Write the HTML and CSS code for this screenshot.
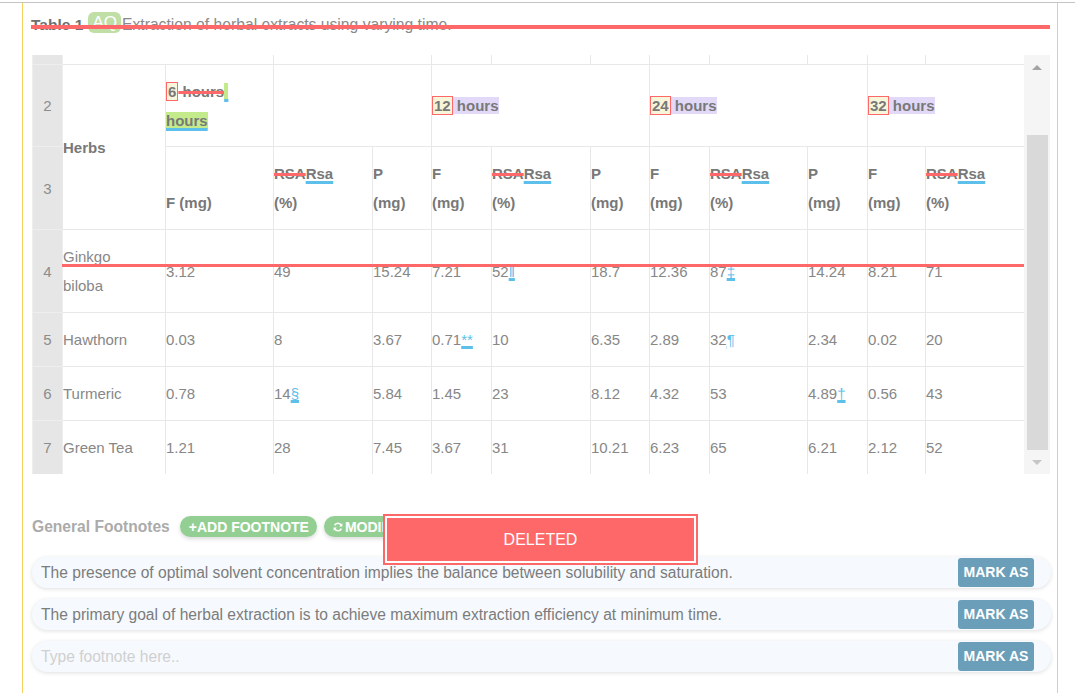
FILE: index.html
```html
<!DOCTYPE html>
<html lang="en">
  <head>
    <meta charset="UTF-8" />
    <title>Table 1 - Edit</title>
    <link rel="stylesheet" href="styles.css">
  </head>
  <body>
    <div class="page">
      <div class="panel">
        <div class="caption">
          <b>Table 1</b>
          <span class="aq">AQ</span><span class="cap-text">Extraction of herbal extracts using varying time.</span>
          <span class="strike-bar"></span>
        </div>

        <div class="grid-wrap">
          <div class="grid-view">
            <table class="grid">
              <colgroup>
                <col style="width:30px"><col style="width:103px"><col style="width:108px">
                <col style="width:99px"><col style="width:59px"><col style="width:60px">
                <col style="width:99px"><col style="width:59px"><col style="width:60px">
                <col style="width:98px"><col style="width:60px"><col style="width:58px">
                <col style="width:99px">
              </colgroup>
              <tr class="r-cut">
                <td class="rn"></td>
                <td colspan="2"></td><td colspan="2"></td>
                <td></td><td></td><td></td><td></td><td></td><td></td><td></td><td></td>
              </tr>
              <tr class="r-head">
                <td class="rn">2</td>
                <th rowspan="2" class="mid">Herbs</th>
                <th><span class="box">6</span><span class="del"> hours</span><span class="ins">&nbsp;</span><br><span class="ins">hours</span></th>
                <th colspan="2"></th>
                <th colspan="3"><span class="box">12</span><span class="hl"> hours</span></th>
                <th colspan="3"><span class="box">24</span><span class="hl"> hours</span></th>
                <th colspan="2"><span class="box">32</span><span class="hl"> hours</span></th>
              </tr>
              <tr class="r-sub">
                <td class="rn">3</td>
                <th>F (mg)</th>
                <th><span class="del">RSA</span><span class="und">Rsa</span><br>(%)</th>
                <th>P<br>(mg)</th>
                <th>F<br>(mg)</th>
                <th><span class="del">RSA</span><span class="und">Rsa</span><br>(%)</th>
                <th>P<br>(mg)</th>
                <th>F<br>(mg)</th>
                <th><span class="del">RSA</span><span class="und">Rsa</span><br>(%)</th>
                <th>P<br>(mg)</th>
                <th>F<br>(mg)</th>
                <th><span class="del">RSA</span><span class="und">Rsa</span><br>(%)</th>
              </tr>
              <tr class="r-tall">
                <td class="rn">4</td>
                <td>Ginkgo<br>biloba</td>
                <td>3.12</td><td>49</td><td>15.24</td><td>7.21</td>
                <td>52<span class="ref">‖</span></td>
                <td>18.7</td><td>12.36</td>
                <td>87<span class="ref">‡</span></td>
                <td>14.24</td><td>8.21</td><td>71</td>
              </tr>
              <tr class="r-body">
                <td class="rn">5</td>
                <td>Hawthorn</td>
                <td>0.03</td><td>8</td><td>3.67</td>
                <td>0.71<span class="ref">**</span></td>
                <td>10</td><td>6.35</td><td>2.89</td>
                <td>32<span class="ref">¶</span></td>
                <td>2.34</td><td>0.02</td><td>20</td>
              </tr>
              <tr class="r-body">
                <td class="rn">6</td>
                <td>Turmeric</td>
                <td>0.78</td>
                <td>14<span class="ref">§</span></td>
                <td>5.84</td><td>1.45</td><td>23</td><td>8.12</td><td>4.32</td><td>53</td>
                <td>4.89<span class="ref">†</span></td>
                <td>0.56</td><td>43</td>
              </tr>
              <tr class="r-body">
                <td class="rn">7</td>
                <td>Green Tea</td>
                <td>1.21</td><td>28</td><td>7.45</td><td>3.67</td><td>31</td>
                <td>10.21</td><td>6.23</td><td>65</td><td>6.21</td><td>2.12</td><td>52</td>
              </tr>
            </table>
            <!-- deleted row marker -->
            <div class="row-strike"></div>
          </div>
          <div class="sbar">
            <div class="sb-btn"><span class="arr-up"></span></div>
            <div class="sb-thumb"></div>
            <div class="sb-btn"><span class="arr-down"></span></div>
          </div>
        </div>

        <div class="fn-head">
          <span class="fn-title">General Footnotes</span>
          <span class="pill">+ADD FOOTNOTE</span>
          <span class="pill">
            <svg width="10" height="10" viewBox="0 0 10 10"><path d="M8.3 3.6A3.6 3.6 0 0 0 1.6 3.4M1.7 6.4a3.6 3.6 0 0 0 6.7.2" fill="none" stroke="#fff" stroke-width="1.6"/><path d="M9.4 1.2v3.2H6.2zM.6 8.8V5.6h3.2z" fill="#fff"/></svg>MODIFY
          </span>
          <div class="deleted">DELETED</div>
        </div>

        <div class="fn-row">
          <span class="fn-text">The presence of optimal solvent concentration implies the balance between solubility and saturation.</span>
          <span class="mark">MARK AS</span>
        </div>
        <div class="fn-row">
          <span class="fn-text">The primary goal of herbal extraction is to achieve maximum extraction efficiency at minimum time.</span>
          <span class="mark">MARK AS</span>
        </div>
        <div class="fn-row">
          <span class="fn-text empty">Type footnote here..</span>
          <span class="mark">MARK AS</span>
        </div>
      </div>
    </div>
  </body>
</html>
```

FILE: styles.css
```css
body {
  margin: 0;
  font-family: "Liberation Sans", Arial, sans-serif;
  font-size: 15px;
  color: #878787;
  background: #fff;
}
.page {
  margin-top: 2px;
  border-top: 1px solid #c4c4c4;
  height: 690px;
  overflow: hidden;
}
.panel {
  margin-left: 22px;
  width: 1019px;
  height: 100%;
  border-left: 1px solid #f7cf5c;
  border-right: 1px solid #f7cf5c;
  padding: 0 6px 0 9px;
}

/* caption */
.caption {
  position: relative;
  padding-top: 9px;
  height: 24px;
  line-height: 24px;
  white-space: nowrap;
}
.caption b {
  color: #6f6f6f;
  font-size: 15.5px;
  margin-left: -1px;
}
.aq {
  display: inline-block;
  background: #bfdfa6;
  color: #fff;
  font-size: 17px;
  line-height: 21px;
  padding: 0 4px;
  border-radius: 6px;
  vertical-align: 2px;
  margin-left: 1px;
}
.cap-text {
  color: #8a8a8a;
  font-size: 15.7px;
  margin-left: 1px;
}
.strike-bar {
  position: absolute;
  left: -1px;
  right: 1px;
  top: 22px;
  height: 4px;
  background: #ff6868;
}

/* table */
.grid-wrap {
  margin-top: 19px;
  width: 1018px;
  height: 419px;
  display: flex;
}
.grid-view {
  position: relative;
  width: 992px;
  height: 419px;
  overflow: hidden;
}
.grid {
  border-collapse: collapse;
  table-layout: fixed;
  width: 992px;
}
.grid td,
.grid th {
  border: 1px solid #e8e8e8;
  padding: 0 14px 0 0;
  line-height: 29px;
  text-align: left;
  vertical-align: middle;
  overflow: hidden;
}
.grid th {
  font-weight: bold;
  color: #787878;
}
.grid td.rn {
  background: #e6e6e6;
  border-color: #eeeeee;
  text-align: center;
  padding: 0;
  color: #8c8c8c;
}
.r-cut td {
  height: 9px;
  line-height: 0;
  border-top: none;
}
.r-head td,
.r-head th {
  height: 81px;
}
.r-sub th {
  height: 70px;
  vertical-align: bottom;
  padding-bottom: 12px;
}
.r-sub td.rn,
.grid th.mid {
  vertical-align: middle;
  padding-bottom: 0;
}
.r-tall td {
  height: 82px;
}
.r-body td {
  height: 53px;
}
.box {
  background: #f8f6da;
  border: 1px solid #ff6868;
  padding: 0 1px;
}
.hl {
  background: #e2d9f8;
}
.del {
  text-decoration: line-through #ff6868 3px;
}
.und {
  text-decoration: underline #5cc0ea 3px;
  text-underline-offset: 2px;
}
.ins {
  background: #c4eb8b;
  text-decoration: underline #5cc0ea 3px;
  text-underline-offset: 2px;
}
.ref {
  color: #5cc0ea;
  text-decoration: underline #5cc0ea 3px;
  text-underline-offset: 1px;
}
.row-strike {
  position: absolute;
  left: 30px;
  right: 0;
  top: 209px;
  height: 3px;
  background: #ff6868;
}

/* scrollbar */
.sbar {
  width: 26px;
  background: #f5f5f5;
  display: flex;
  flex-direction: column;
}
.sb-btn {
  height: 24px;
  display: flex;
  align-items: center;
  justify-content: center;
}
.arr-up {
  border-left: 5px solid transparent;
  border-right: 5px solid transparent;
  border-bottom: 5px solid #a3a3a3;
}
.arr-down {
  border-left: 5px solid transparent;
  border-right: 5px solid transparent;
  border-top: 5px solid #c6c6c6;
}
.sb-thumb {
  margin: 56px 2px 0 3px;
  height: 315px;
  background: #d9d9d9;
}

/* footnotes */
.fn-head {
  position: relative;
  margin-top: 42px;
  height: 21px;
  display: flex;
  align-items: center;
  gap: 7px;
}
.fn-title {
  font-weight: bold;
  font-size: 15.6px;
  color: #ababab;
  margin-right: 3px;
}
.pill {
  display: inline-flex;
  align-items: center;
  gap: 1px;
  height: 21px;
  padding: 0 8px 0 9px;
  border-radius: 11px;
  background: #93cf92;
  color: #fff;
  font-size: 14px;
  font-weight: bold;
  box-shadow: 0 2px 4px rgba(0, 0, 0, 0.15);
}
.pill svg {
  margin-right: 1px;
}
.deleted {
  position: absolute;
  left: 353px;
  top: 0;
  width: 307px;
  height: 43px;
  line-height: 43px;
  background: #ff6868;
  border: 2px solid #fff;
  outline: 2px solid #ff6868;
  color: #fff;
  text-align: center;
  font-size: 16px;
}
.fn-row {
  display: flex;
  align-items: center;
  height: 31px;
  margin-top: 11px;
  padding-left: 9px;
  border-radius: 16px;
  background: #f6fafe;
  box-shadow: 0 1px 4px rgba(0, 0, 0, 0.13);
}
.fn-head + .fn-row {
  margin-top: 20px;
}
.fn-text {
  color: #7c7c7c;
  font-size: 15.6px;
  white-space: nowrap;
}
.fn-text.empty {
  color: #d0d0d0;
}
.mark {
  margin-left: auto;
  margin-right: 17px;
  width: 76px;
  height: 29px;
  line-height: 29px;
  text-align: center;
  background: #6b9fb9;
  color: #fff;
  font-size: 14px;
  font-weight: bold;
  border-radius: 3px;
}
```
